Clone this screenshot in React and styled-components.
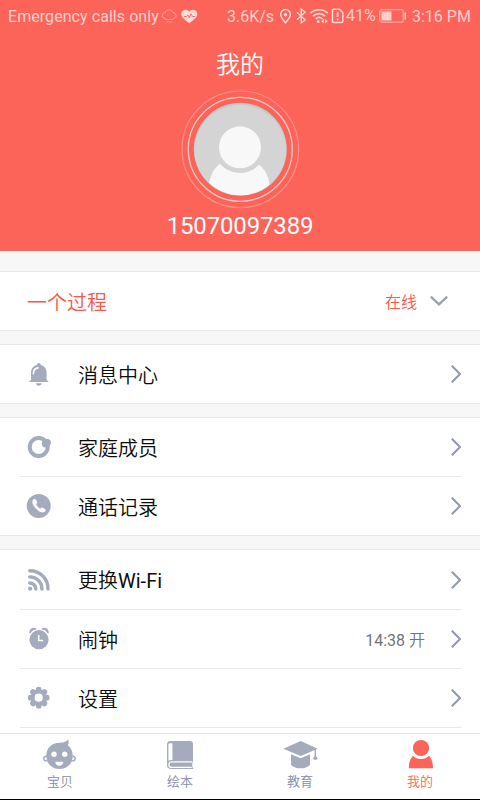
import React from "react"
import styled, { createGlobalStyle } from "styled-components"

const GlobalStyle = createGlobalStyle`
  * {
    box-sizing: border-box;
  }

  body {
    margin: 0;
    background: #f7f7f7;
    font-family: Roboto, "Noto Sans CJK SC", sans-serif;
  }
`

const Screen = styled.div`
  width: 480px;
  height: 800px;
  display: flex;
  flex-direction: column;
  overflow: hidden;
  background: #f7f7f7;
  border-bottom: 1px solid #000;
`

const Header = styled.header`
  flex: none;
  height: 251px;
  display: flex;
  flex-direction: column;
  align-items: center;
  background: #fc6359;
  color: #fff;
`

const StatusBar = styled.div`
  width: 100%;
  height: 32px;
  padding: 0 10px 0 8px;
  display: flex;
  align-items: center;
  color: #ffcfca;
  font-size: 16px;
  line-height: 32px;
  white-space: nowrap;

  svg {
    flex: none;
    display: block;
  }
`

const StatusText = styled.span`
  flex: none;
  width: ${props => props.$width}px;
  padding-top: ${props => (props.$raised ? 0 : 2)}px;
  margin-left: ${props => props.$before || 0}px;
  margin-right: ${props => props.$gap || 0}px;
  letter-spacing: ${props => props.$spacing || 0}px;
`

const StatusGap = styled.span`
  flex: 1;
`

const Title = styled.h1`
  margin: 13px 0 0;
  font-family: "Noto Sans CJK SC", sans-serif;
  font-size: 24px;
  font-weight: 350;
  line-height: 36px;
`

const Avatar = styled.svg`
  display: block;
  margin-top: 9px;
`

const Phone = styled.div`
  height: 32px;
  font-size: 24px;
  line-height: 32px;
  letter-spacing: -0.15px;
`

const List = styled.main`
  flex: 1;
  min-height: 0;
  padding-top: 20px;
  overflow: hidden;
`

const Group = styled.section`
  margin-bottom: 13px;
  padding: 0 19px 0 20px;
  background: #fff;
  border-top: 1px solid #e8e8e8;
  border-bottom: 1px solid #e8e8e8;

  &:last-child {
    margin-bottom: 0;
    border-bottom: none;
  }
`

const Row = styled.div`
  height: 59px;
  padding-left: 6px;
  display: flex;
  align-items: center;
  color: #111;
  font-size: 20px;

  & + & {
    border-top: 1px solid #e9e9e9;
  }

  ${Group}:not(:last-child) &:first-child {
    height: 58px;
  }

  svg {
    flex: none;
    display: block;
  }
`

const ListEnd = styled.div`
  height: 8px;
  border-top: 1px solid #e9e9e9;
`

const Label = styled.span`
  flex: 1;
  margin-left: ${props => (props.$accent ? 1 : 26)}px;
  padding-top: 3px;
  color: ${props => (props.$accent ? "#fc5549" : "#0c0c0c")};
  font-weight: 350;
  line-height: 28px;
`

const Latin = styled.span`
  font-weight: 400;
`

const Value = styled.span`
  margin-right: ${props => (props.$accent ? 13 : 26)}px;
  color: ${props => (props.$accent ? "#fc5549" : "#747474")};
  font-size: 16px;
  font-weight: 350;
`

const TabBar = styled.nav`
  flex: none;
  height: 66px;
  display: flex;
  background: #fff;
  border-top: 1px solid #e6e6e6;
`

const Tab = styled.a`
  flex: 1;
  padding-top: 4px;
  display: flex;
  flex-direction: column;
  align-items: center;
  color: ${props => (props.$active ? "#fc6359" : "#a4abbc")};

  svg {
    display: block;
  }
`

const TabLabel = styled.span`
  margin-top: 3px;
  color: ${props => (props.$active ? "#fc6359" : "#858da3")};
  font-size: 13px;
  font-weight: 350;
  line-height: 18px;
`

const Icon = ({ children }) => (
  <svg width="26" height="26" viewBox="0 0 26 26" fill="#a4abbc">
    {children}
  </svg>
)

const BellIcon = () => (
  <Icon>
    <circle cx="12.8" cy="3.8" r="1.9" />
    <path d="M5 19V11.8C5 7 8.4 3.8 12.8 3.8s7.8 3.2 7.8 8V19l1.7 1.2v.9h-19v-.9z" />
    <path d="M9.8 22.2h6c-.4 1.6-1.5 2.5-3 2.5s-2.6-.9-3-2.5z" />
    <path d="M7.4 12.8c0-3.2 1.7-5.5 4.6-5.9" fill="none" stroke="#fff" strokeWidth="1.6" strokeLinecap="round" />
  </Icon>
)

const FamilyIcon = () => (
  <Icon>
    <circle cx="12.7" cy="13" r="9" fill="none" stroke="#a4abbc" strokeWidth="4" />
    <circle cx="21.3" cy="8.7" r="3.6" />
    <circle cx="19.8" cy="9.4" r="4" />
  </Icon>
)

const CallIcon = () => (
  <Icon>
    <circle cx="12.7" cy="13" r="12" />
    <path
      d="M7.2 6.6c1.1-1 2.200-.7 2.800.2l1 1.800c.5 1 .2 1.600-.7 2.300-.4.5.4 1.800 1.500 2.900s2.500 2.100 3 1.700c.7-.9 1.500-1.200 2.400-.6l1.700 1.100c.9.700 1.200 1.600.1 2.600-1.700 1.600-5 1.100-8.700-2.600S5.400 8.300 7.200 6.600z"
      fill="#fff"
    />
  </Icon>
)

const WifiIcon = () => (
  <Icon>
    <circle cx="4.1" cy="21.7" r="2.1" />
    <g fill="none" stroke="#a4abbc" strokeWidth="3.4" strokeLinecap="round">
      <path d="M3.7 3.7C14.3 3.7 22 11.600 22 22" />
      <path d="M3.7 9.900C10.600 9.900 15.900 15.200 15.900 22" />
      <path d="M3.7 16C7.100 16 9.800 18.700 9.800 22" />
    </g>
  </Icon>
)

const ClockIcon = () => (
  <Icon>
    <circle cx="13" cy="13.7" r="9.6" />
    <path d="M3.3 7.2C2.900 2.700 7.600.2 11 3 7.800 3.600 5.500 5.200 4.300 7.600z" />
    <path d="M22.700 7.200C23.100 2.700 18.400.2 15 3c3.200.6 5.500 2.200 6.700 4.600z" />
    <path d="M12.7 9v5.500h4.400" fill="none" stroke="#fff" strokeWidth="1.5" />
  </Icon>
)

const GearIcon = () => (
  <Icon>
    {[0, 45, 90, 135, 180, 225, 270, 315].map(angle => (
      <circle key={angle} cx="12.7" cy="4.7" r="2.9" transform={`rotate(${angle} 12.7 12.7)`} />
    ))}
    <circle cx="12.7" cy="12.7" r="8.2" />
    <circle cx="12.7" cy="12.7" r="4.1" fill="#fff" />
  </Icon>
)

const ChevronRight = () => (
  <svg width="10" height="20" viewBox="0 0 10 20" fill="none" stroke="#9299ae" strokeWidth="2">
    <path d="M.8 1.700 9 10 .8 18.300" />
  </svg>
)

const DownArrow = styled.svg`
  margin-right: 13px;
`

const ChevronDown = () => (
  <DownArrow width="18" height="12" viewBox="0 0 18 12" fill="none" stroke="#9aa1b3" strokeWidth="2.2">
    <path d="M.8 1.6 9 9.4l8.200-7.800" />
  </DownArrow>
)

const TabIcon = ({ children }) => (
  <svg width="36" height="32" viewBox="0 0 36 32" fill="currentColor">
    {children}
  </svg>
)

const BabyIcon = () => (
  <TabIcon>
    <circle cx="4.2" cy="20.5" r="2.4" fill="#fff" stroke="currentColor" strokeWidth="1.4" />
    <circle cx="30.800" cy="20.5" r="2.4" fill="#fff" stroke="currentColor" strokeWidth="1.4" />
    <path d="M17.5 4.800c2.600 0 6.100-.2 8.700-3.200.8 2.300.4 4-.4 5.600 3.200 2.300 4.900 6 4.900 10.600 0 7.600-5.600 13.200-13.200 13.200S4.300 25.400 4.300 17.800 9.800 4.800 17.500 4.800z" />
    <circle cx="12" cy="16.300" r="2.700" fill="#fff" />
    <circle cx="22.700" cy="16.300" r="2.700" fill="#fff" />
    <path d="M13.300 23.800h8c-.2 2.700-1.700 4-4 4s-3.800-1.300-4-4z" fill="#fff" />
  </TabIcon>
)

const BookIcon = () => (
  <TabIcon>
    <path d="M8.500 3h19.300c2 0 3.200 1.200 3.200 3.200v17.600l-.7 1v4.400l1 .9v.9H9.200C6.500 31 5 29.500 5 27V6.500C5 4.300 6.300 3 8.500 3z" />
    <path d="M8.100 5.200h2.300v16.700H9c-1 0-1.800.2-2.600.8V7.200c0-1.300.5-2 1.700-2z" fill="#fff" />
    <path d="M30.300 23.900H9.500c-3.400 0-3.400 5.500 0 5.500h20.300" fill="none" stroke="#fff" strokeWidth="1.300" />
  </TabIcon>
)

const CapIcon = () => (
  <TabIcon>
    <path d="M1.300 10.700 18.700 3l17 7.700-17 7.300z" />
    <path d="M9 16.200l9.700 4 9.300-4v10.700c-2.500 2.300-5.500 3.400-9.400 3.400S11.500 29.200 9 26.900z" />
    <path d="M33.300 11v7" stroke="currentColor" strokeWidth="1.500" />
    <path d="M33.300 16.800l2.400 3.800c-.8 1.700-4 1.700-4.800 0z" />
  </TabIcon>
)

const PersonIcon = () => (
  <TabIcon>
    <circle cx="19" cy="10" r="8.100" />
    <path d="M11 17.700c2.200 2.100 4.800 3.200 8 3.200s5.800-1.100 8-3.200c2.600 2.700 4 6.800 4 12.500H6.800c0-5.700 1.600-9.800 4.200-12.500z" />
  </TabIcon>
)

const NetworkIcons = () => (
  <svg width="66" height="16" viewBox="280 8 66 16" fill="none" stroke="#ffdbd7" strokeWidth="1.500">
    <path d="M285.500 22.800c-2.700-3.300-4.900-5.600-4.900-8.300a4.900 4.900 0 0 1 9.800 0c0 2.700-2.200 5-4.900 8.300z" />
    <circle cx="285.500" cy="14.800" r="1.700" fill="#ffdbd7" stroke="none" />
    <path d="M297 12.300l8.200 7.700-4 3V9l4 3-8.200 7.700" strokeWidth="1.300" />
    <path d="M310.500 13.200c4.900-4.700 12.300-4.700 17.200 0M313 16.200c3.500-3.400 8.700-3.400 12.200 0M315.700 19c2-1.900 4.800-1.900 6.800 0" strokeWidth="1.600" />
    <circle cx="318.200" cy="21.700" r="1.400" fill="#ffdbd7" stroke="none" />
    <path d="M323.800 19l-2.500 2.300 2.500 2.300zM325.200 19l2.500 2.300-2.500 2.300z" fill="#ffdbd7" stroke="none" />
    <path d="M333.700 9.200h5.800l3.300 3.300v8.700c0 .9-.4 1.300-1.300 1.300h-7.800c-.8 0-1.200-.4-1.200-1.300V10.500c0-.9.4-1.300 1.200-1.300z" />
    <path d="M337.600 12.200v4.800M337.600 18.400v1.800" strokeWidth="1.700" />
  </svg>
)

const WeatherIcons = () => (
  <svg width="36" height="16" viewBox="162 8 36 16" fill="none" stroke="#ffcfca">
    <path d="M165.500 18.500c-2-.2-3.200-1.300-3.200-3s1.300-2.900 3-2.900c.6-1.700 1.900-2.700 3.800-2.700s3.300 1 3.800 2.800c2 .1 3.100 1.100 3.100 2.900s-1.200 2.800-3.200 2.900" strokeWidth=".8" opacity=".8" />
    <path d="M165.500 19.500h8M166.500 22h6" strokeWidth="1" strokeDasharray="1 1" />
    <path d="M189.300 23.200c-4.800-3.700-8-6-8-9.300 0-4.300 5.400-5.800 8-2.200 2.600-3.600 8-2.100 8 2.200 0 3.300-3.200 5.600-8 9.300z" fill="#ffdbd7" stroke="none" />
    <path d="M184 16.500h2.500l1.500-1.500 1.300 2.800 1.700-4 1.500 2.700h2.500" stroke="#fc6359" strokeWidth=".9" />
  </svg>
)

const BatteryIcon = () => (
  <svg width="28" height="14" viewBox="0 0 28 14" fill="#ffcfca">
    <rect x=".7" y=".7" width="23.500" height="12.500" rx="2" fill="none" stroke="#ffaaa3" strokeWidth="1.200" />
    <rect x="2.500" y="2.500" width="10" height="9" />
    <rect x="25.500" y="3.500" width="1.500" height="7" />
  </svg>
)

const tabs = [
  { name: "宝贝", icon: BabyIcon },
  { name: "绘本", icon: BookIcon },
  { name: "教育", icon: CapIcon },
  { name: "我的", icon: PersonIcon, active: true },
]

const groups = [
  [{ name: "消息中心", icon: BellIcon }],
  [
    { name: "家庭成员", icon: FamilyIcon },
    { name: "通话记录", icon: CallIcon },
  ],
  [
    { name: "更换", latin: "Wi-Fi", icon: WifiIcon },
    { name: "闹钟", icon: ClockIcon, time: "14:38", value: "开" },
    { name: "设置", icon: GearIcon },
  ],
]

const App = () => {
  return (
    <>
      <GlobalStyle />
      <Screen>
        <Header>
          <StatusBar>
            <StatusText $width={151} $gap={3} $spacing={0.06}>
              Emergency calls only
            </StatusText>
            <WeatherIcons />
            <StatusGap />
            <StatusText $width={48} $gap={5}>
              3.6K/s
            </StatusText>
            <NetworkIcons />
            <StatusText $width={30} $gap={3} $raised>
              41%
            </StatusText>
            <BatteryIcon />
            <StatusText $width={58} $before={5}>
              3:16 PM
            </StatusText>
          </StatusBar>
          <Title>我的</Title>
          <Avatar width="120" height="120" viewBox="-60.3 -59.3 120 120">
            <clipPath id="face">
              <circle r="46" />
            </clipPath>
            <circle r="58.3" fill="none" stroke="#fff" strokeOpacity=".3" strokeWidth="1.2" />
            <circle r="52" fill="none" stroke="#fff" strokeOpacity=".65" strokeWidth="1.3" />
            <circle r="46.5" fill="#bfc8ca" />
            <g clipPath="url(#face)">
              <circle cy="1.5" r="46" fill="#d4d4d5" />
              <path d="M-20.500 14.500C-15 20.500-8 23.700-.3 23.700S14 20.500 18.500 15.500C25 20 29 28 29 36v12h-60V36c0-8 4-16 10.500-21.500z" fill="#f8f8f8" />
              <circle cx="-.3" cy="-2" r="22.500" fill="#d4d4d5" />
              <circle cx="-.3" cy="-2" r="21" fill="#f8f8f8" />
            </g>
          </Avatar>
          <Phone>15070097389</Phone>
        </Header>
        <List>
          <Group>
            <Row>
              <Label $accent>一个过程</Label>
              <Value $accent>在线</Value>
              <ChevronDown />
            </Row>
          </Group>
          {groups.map((rows, i) => (
            <Group key={i}>
              {rows.map(({ name, latin, icon: RowIcon, time, value }) => (
                <Row key={name}>
                  <RowIcon />
                  <Label>
                    {name}
                    {latin && <Latin>{latin}</Latin>}
                  </Label>
                  {value && (
                    <Value>
                      <Latin>{time}</Latin> {value}
                    </Value>
                  )}
                  <ChevronRight />
                </Row>
              ))}
              {i === groups.length - 1 && <ListEnd />}
            </Group>
          ))}
        </List>
        <TabBar>
          {tabs.map(({ name, icon: Glyph, active }) => (
            <Tab key={name} $active={active}>
              <Glyph />
              <TabLabel $active={active}>{name}</TabLabel>
            </Tab>
          ))}
        </TabBar>
      </Screen>
    </>
  )
}

export default App
